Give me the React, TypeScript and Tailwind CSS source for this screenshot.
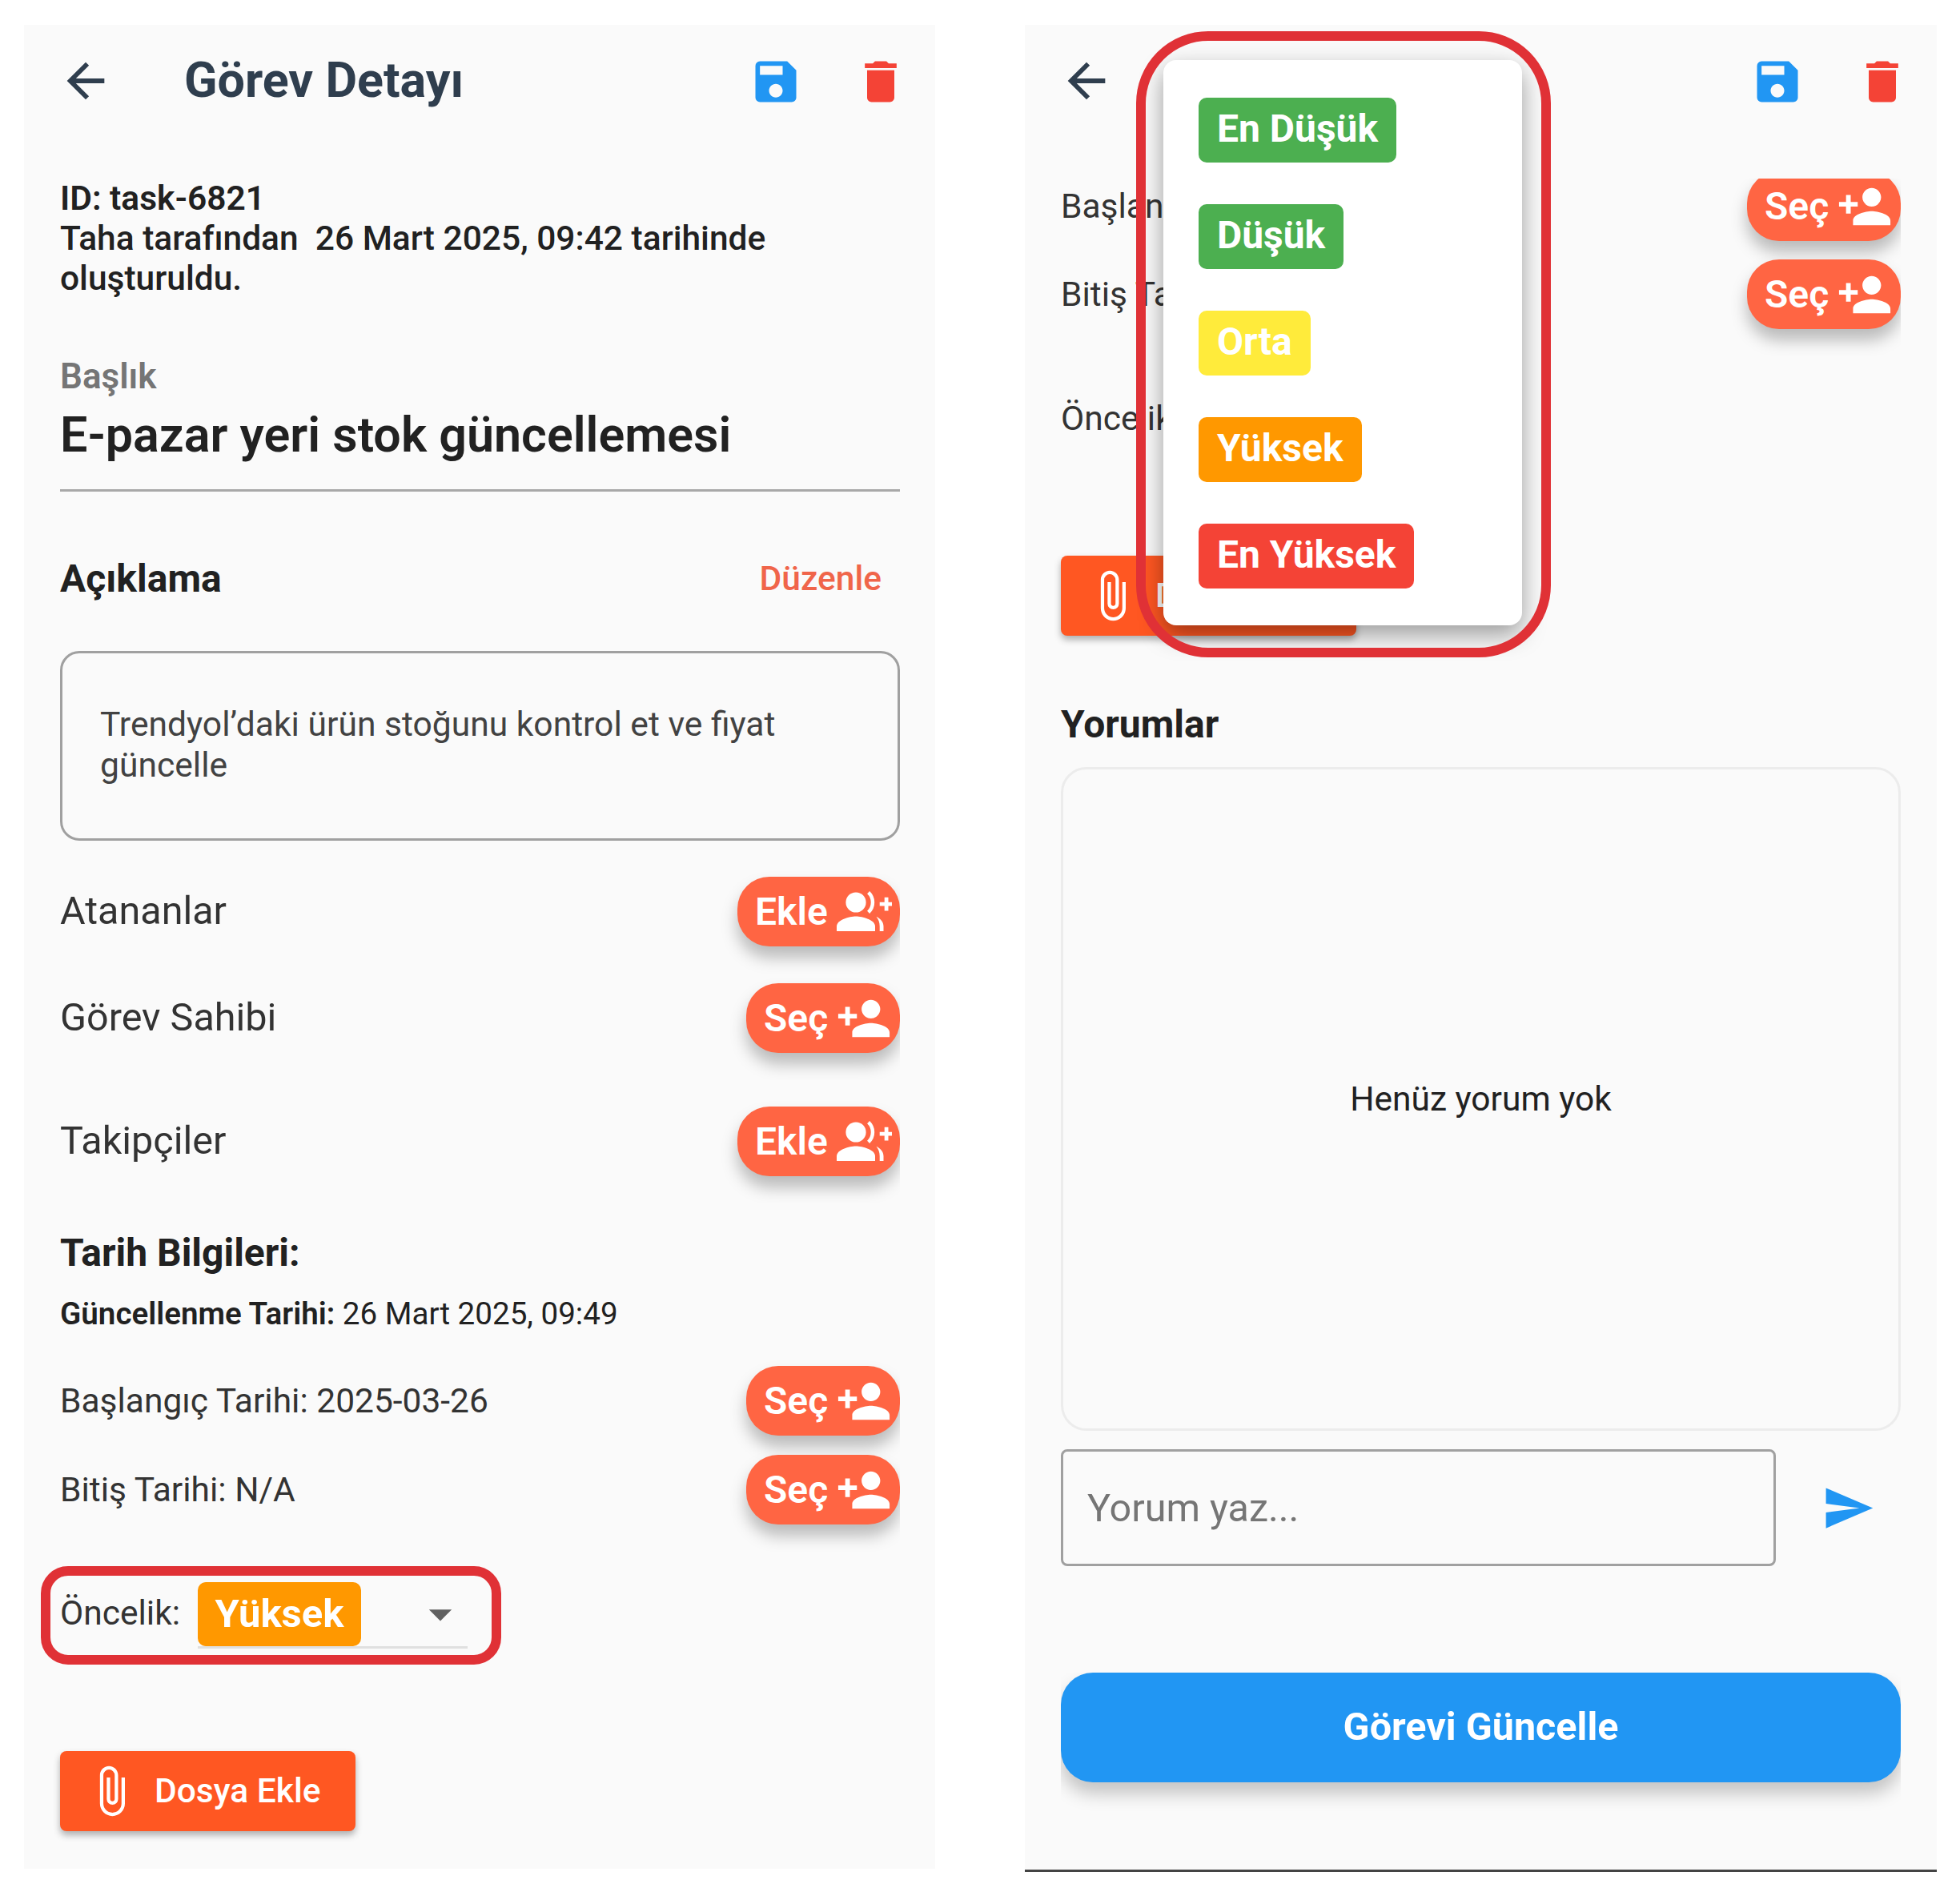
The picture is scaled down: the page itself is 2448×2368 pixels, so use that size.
import { MdArrowBack, MdArrowDropDown, MdAttachFile, MdDelete, MdPersonAdd, MdSave, MdSend } from 'react-icons/md';

const PRIORITIES = [
  { label: 'En Düşük', color: 'bg-[#4caf50]' },
  { label: 'Düşük', color: 'bg-[#4caf50]' },
  { label: 'Orta', color: 'bg-[#ffeb3b]' },
  { label: 'Yüksek', color: 'bg-[#ff9800]' },
  { label: 'En Yüksek', color: 'bg-[#f44336]' },
];

// group icon with the plus on the right, the md set only has it mirrored
function GroupPlus() {
  return (
    <svg viewBox="0 0 24 24" className="w-[72px] h-[72px] shrink-0" fill="white">
      <circle cx="9" cy="8" r="4.2" />
      <path d="M1 20v-2c0-2.8 5.3-4.2 8-4.2s8 1.4 8 4.2v2z" />
      <path d="M14.2 3.9a5.6 5.6 0 0 1 0 8.2" fill="none" stroke="white" strokeWidth="1.5" />
      <path d="M17.5 13.9c1.7.9 3 2.2 3 4.1v2h-1.6v-2c0-1.6-.5-3-1.4-4.1z" />
      <path d="M20.9 5.9h1.6v2h1.9v1.6h-1.9v2h-1.6v-2h-2V7.9h2z" />
    </svg>
  );
}

function ActionButton({ kind }: { kind: 'ekle' | 'sec' }) {
  const isAdd = kind === 'ekle';
  return (
    // the shadow is cut off at the right edge of the content, like in the app
    <div className="overflow-hidden -my-[34px] py-[34px] pl-[34px] shrink-0">
      <button
        className={`flex items-center h-[87px] rounded-[40px] bg-[#ff6543] text-white text-[48px] font-semibold pl-[22px] shadow-[0_14px_20px_rgba(0,0,0,0.26)] ${
          isAdd ? 'w-[203px] gap-[8px]' : 'w-[192px] gap-[10px]'
        }`}
      >
        {isAdd ? 'Ekle' : 'Seç'}
        {isAdd ? <GroupPlus /> : <MdPersonAdd size={70} className="shrink-0" />}
      </button>
    </div>
  );
}

function Row({ label, kind, className = '', textClass = 'text-[48.5px]' }: { label: string; kind: 'ekle' | 'sec'; className?: string; textClass?: string }) {
  return (
    <div className={`flex items-center justify-between h-[87px] ${className}`}>
      <span className={`${textClass} text-[#333333]`}>{label}</span>
      <ActionButton kind={kind} />
    </div>
  );
}

function Header({ title }: { title?: string }) {
  return (
    <div className="flex items-center h-[140px] pl-[42px] pr-[34px] shrink-0">
      <MdArrowBack size={70} className="text-[#2f3e4e]" />
      {title && <h1 className="ml-[88px] text-[61px] font-bold text-[#2f3e4e]">{title}</h1>}
      <div className="ml-auto mt-[2px] flex items-center gap-[63px]">
        <MdSave size={68} className="text-[#2196f3]" />
        <MdDelete size={68} className="text-[#f44336]" />
      </div>
    </div>
  );
}

function DosyaEkle({ className = '' }: { className?: string }) {
  return (
    <button className={`flex items-center w-[369px] h-[100px] rounded-[8px] bg-[#ff5722] text-white text-[42.5px] font-medium pl-[30px] shadow-[0_5px_8px_rgba(0,0,0,0.3)] ${className}`}>
      <MdAttachFile size={68} className="shrink-0" />
      <span className="ml-[20px]">Dosya Ekle</span>
    </button>
  );
}

function PrioritySelect() {
  return (
    <div className="flex items-start h-[83px]">
      <span className="text-[42.5px] leading-[50px] mt-[14px] w-[172px] text-[#333333]">Öncelik:</span>
      <div className="relative w-[337px] h-[83px] border-b-[3px] border-[#e0e0e0]">
        <span className="flex items-center justify-center w-[204px] h-[80px] rounded-[10px] bg-[#ff9800] text-white text-[49px] font-bold">Yüksek</span>
        <MdArrowDropDown size={68} className="absolute left-[269px] top-[6px] text-[#616161]" />
      </div>
    </div>
  );
}

export default function App() {
  return (
    <div className="w-[2448px] h-[2368px] bg-white overflow-hidden flex gap-[112px] pt-[31px] pl-[30px] [font-family:Roboto,sans-serif] text-[#212121]">
      {/* Left screen */}
      <div className="w-[1138px] h-[2303px] bg-[#fafafa] flex flex-col shrink-0">
        <Header title="Görev Detayı" />
        <div className="flex flex-col pl-[45px] pr-[44px]">
          <p className="mt-[52px] text-[42.5px] leading-[50px] font-medium w-[1000px]">
            <span className="font-semibold">ID: task-6821</span>
            <br />
            Taha tarafından&nbsp; 26 Mart 2025, 09:42 tarihinde oluşturuldu.
          </p>
          <p className="mt-[72px] text-[44px] leading-[50px] font-semibold text-[#757575]">Başlık</p>
          <p className="mt-[11px] text-[61px] leading-[74px] font-semibold">E-pazar yeri stok güncellemesi</p>
          <div className="mt-[31px] border-b-[3px] border-[#a8a8a8]" />

          <div className="mt-[79px] h-[60px] flex items-center justify-between">
            <h2 className="text-[48px] font-bold">Açıklama</h2>
            <span className="text-[42.5px] font-medium text-[#f0654a] mr-[23px]">Düzenle</span>
          </div>

          <div className="mt-[60px] h-[237px] rounded-[24px] border-[3px] border-[#a0a0a0] pl-[47px] pr-[40px] pt-[63px] text-[42.6px] leading-[51px] text-[#424242]">
            Trendyol’daki ürün stoğunu kontrol et ve fiyat güncelle
          </div>

          <Row label="Atananlar" kind="ekle" className="mt-[45px]" />
          <Row label="Görev Sahibi" kind="sec" className="mt-[46px]" />
          <Row label="Takipçiler" kind="ekle" className="mt-[67px]" />

          <h2 className="mt-[66px] h-[60px] leading-[60px] text-[48px] font-bold">Tarih Bilgileri:</h2>
          <p className="mt-[21px] text-[38.6px] leading-[50px]">
            <span className="font-semibold">Güncellenme Tarihi:</span> 26 Mart 2025, 09:49
          </p>

          <Row label="Başlangıç Tarihi: 2025-03-26" kind="sec" className="mt-[40px]" textClass="text-[42.5px]" />
          <Row label="Bitiş Tarihi: N/A" kind="sec" className="mt-[24px]" textClass="text-[42.5px]" />

          <div className="relative mt-[72px]">
            <PrioritySelect />
            <div className="absolute -left-[24px] -top-[20px] w-[575px] h-[123px] rounded-[34px] border-[12px] border-[#e03136]" />
          </div>

          <DosyaEkle className="mt-[128px]" />
        </div>
      </div>

      {/* Right screen, scrolled with the priority menu open */}
      <div className="relative w-[1139px] h-[2307px] bg-[#fafafa] border-b-[3px] border-[#444444] flex flex-col shrink-0">
        <Header />
        <div className="mt-[52px] flex-1 overflow-hidden flex flex-col pl-[45px] pr-[45px]">
          <Row label="Başlangıç Tarihi: 2025-03-26" kind="sec" className="-mt-[9px]" textClass="text-[42.5px]" />
          <Row label="Bitiş Tarihi: N/A" kind="sec" className="mt-[23px]" textClass="text-[42.5px]" />
          <div className="mt-[73px]">
            <PrioritySelect />
          </div>
          <DosyaEkle className="mt-[127px]" />

          <h2 className="mt-[81px] h-[60px] leading-[60px] text-[48px] font-bold">Yorumlar</h2>
          <div className="mt-[23px] h-[829px] rounded-[32px] border-[3px] border-[#ececec] flex items-center justify-center text-[42.5px]">
            Henüz yorum yok
          </div>

          <div className="mt-[23px] flex items-center">
            <input
              placeholder="Yorum yaz..."
              className="w-[893px] h-[146px] rounded-[8px] border-[3px] border-[#a0a0a0] pl-[30px] text-[48.5px] placeholder:text-[#757575] bg-transparent"
            />
            <MdSend size={67} className="ml-[57px] text-[#2196f3]" />
          </div>

          <div className="mt-[133px] overflow-hidden pb-[50px]">
            <button className="w-full h-[137px] rounded-[40px] bg-[#2196f3] text-white text-[48.5px] font-bold shadow-[0_14px_22px_rgba(0,0,0,0.22)]">
              Görevi Güncelle
            </button>
          </div>
        </div>

        {/* open menu */}
        <div className="absolute left-[173px] top-[44px] w-[448px] h-[706px] rounded-[16px] bg-white shadow-[0_12px_30px_rgba(0,0,0,0.38)] flex flex-col items-start gap-[52px] pl-[44px] pt-[47px]">
          {PRIORITIES.map(p => (
            <span key={p.label} className={`flex items-center h-[81px] px-[23px] pb-[4px] rounded-[10px] text-white text-[48px] font-bold ${p.color}`}>
              {p.label}
            </span>
          ))}
        </div>
        <div className="absolute left-[139px] top-[8px] w-[518px] h-[782px] rounded-[90px] border-[12px] border-[#e03136]" />
      </div>
    </div>
  );
}
